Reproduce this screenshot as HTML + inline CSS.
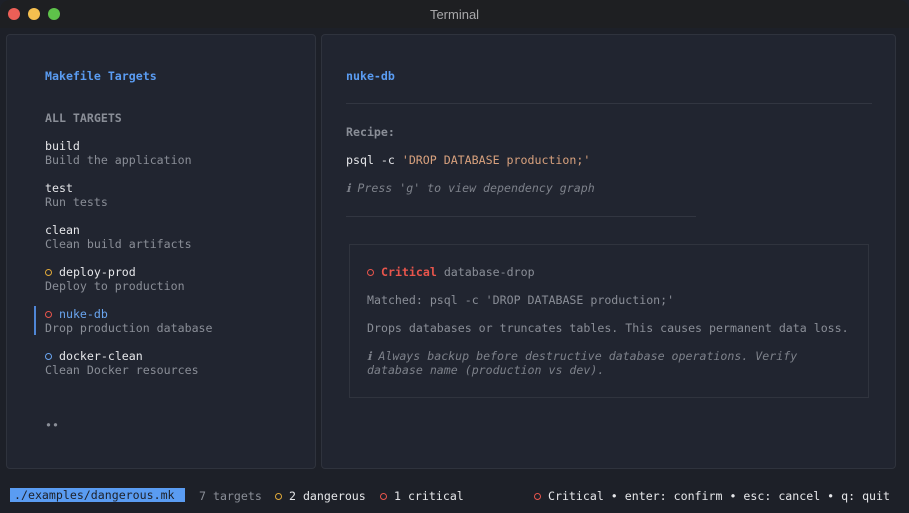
<!DOCTYPE html>
<html><head><style>
*{margin:0;padding:0;box-sizing:border-box}
body{width:909px;height:513px;background:#1d2028;font-family:"DejaVu Sans Mono","Liberation Mono",monospace;font-size:11.6px;color:#d4d6dc;position:relative;overflow:hidden}
.tb{position:absolute;left:0;top:0;width:909px;height:28px;background:#1e1f22;border-radius:10px 10px 0 0}
.tb .t{position:absolute;left:0;right:0;top:7px;text-align:center;font-family:"Liberation Sans",sans-serif;font-size:13px;color:#a8a8aa}
.dot{position:absolute;top:8px;width:12px;height:12px;border-radius:50%}
.p{position:absolute;background:#212530;border:1px solid #2f333d;border-radius:4px}
.l{position:absolute;line-height:14px;white-space:pre}
.b{font-weight:bold}
.blue{color:#5a9cf2}.gray{color:#8a8e97}.w{color:#e6e7ea}.or{color:#d9a27e}.red{color:#e8554c}.yel{color:#e0a93a}.lb{color:#6aa5f0}
.i{font-style:italic;color:#7d818a}
.hr{position:absolute;height:1px;background:#323641}
.c{display:inline-block;width:7px;height:7px;border:1px solid currentColor;border-radius:50%;vertical-align:0}
</style></head><body>
<div class="tb"><div class="dot" style="left:8px;background:#ec5f57"></div><div class="dot" style="left:28px;background:#f5bf4f"></div><div class="dot" style="left:48px;background:#5ec24a"></div><div class="t">Terminal</div></div>
<div class="p" style="left:6px;top:34px;width:310px;height:435px"></div>
<div class="p" style="left:321px;top:34px;width:575px;height:435px"></div>

<div class="l b blue" style="left:45px;top:69px">Makefile Targets</div>
<div class="l b gray" style="left:45px;top:111px">ALL TARGETS</div>
<div class="l w" style="left:45px;top:139px">build</div><div class="l gray" style="left:45px;top:153px">Build the application</div>
<div class="l w" style="left:45px;top:181px">test</div><div class="l gray" style="left:45px;top:195px">Run tests</div>
<div class="l w" style="left:45px;top:223px">clean</div><div class="l gray" style="left:45px;top:237px">Clean build artifacts</div>
<div class="l w" style="left:45px;top:265px"><span class="yel c"></span> deploy-prod</div><div class="l gray" style="left:45px;top:279px">Deploy to production</div>
<div style="position:absolute;left:34px;top:306px;width:2px;height:29px;background:#4f86d6"></div>
<div class="l lb" style="left:45px;top:307px"><span class="red c"></span> nuke-db</div><div class="l gray" style="left:45px;top:321px">Drop production database</div>
<div class="l w" style="left:45px;top:349px"><span class="lb c"></span> docker-clean</div><div class="l gray" style="left:45px;top:363px">Clean Docker resources</div>
<div class="l gray" style="left:45px;top:418px">••</div>

<div class="l b blue" style="left:346px;top:69px">nuke-db</div>
<div class="hr" style="left:346px;top:103px;width:526px"></div>
<div class="l b gray" style="left:346px;top:125px">Recipe:</div>
<div class="l w" style="left:346px;top:153px">psql -c <span class="or">'DROP DATABASE production;'</span></div>
<div class="l i" style="left:346px;top:181px">ℹ Press 'g' to view dependency graph</div>
<div class="hr" style="left:346px;top:216px;width:350px"></div>
<div style="position:absolute;left:349px;top:244px;width:520px;height:154px;border:1px solid #30343e"></div>
<div class="l" style="left:367px;top:265px"><span class="red c"></span> <span class="red b">Critical</span> <span class="gray">database-drop</span></div>
<div class="l gray" style="left:367px;top:293px">Matched: psql -c 'DROP DATABASE production;'</div>
<div class="l gray" style="left:367px;top:321px">Drops databases or truncates tables. This causes permanent data loss.</div>
<div class="l i" style="left:367px;top:349px">ℹ Always backup before destructive database operations. Verify
database name (production vs dev).</div>

<div class="l" style="left:10px;top:488px;width:175px;background:#5a9cf2;color:#1d2028;padding:0 4px">./examples/dangerous.mk</div>
<div class="l gray" style="left:199px;top:489px">7 targets</div>
<div class="l w" style="left:275px;top:489px"><span class="yel c"></span> 2 dangerous</div>
<div class="l w" style="left:380px;top:489px"><span class="red c"></span> 1 critical</div>
<div class="l w" style="left:534px;top:489px"><span class="red c"></span> Critical • enter: confirm • esc: cancel • q: quit</div>
</body></html>
